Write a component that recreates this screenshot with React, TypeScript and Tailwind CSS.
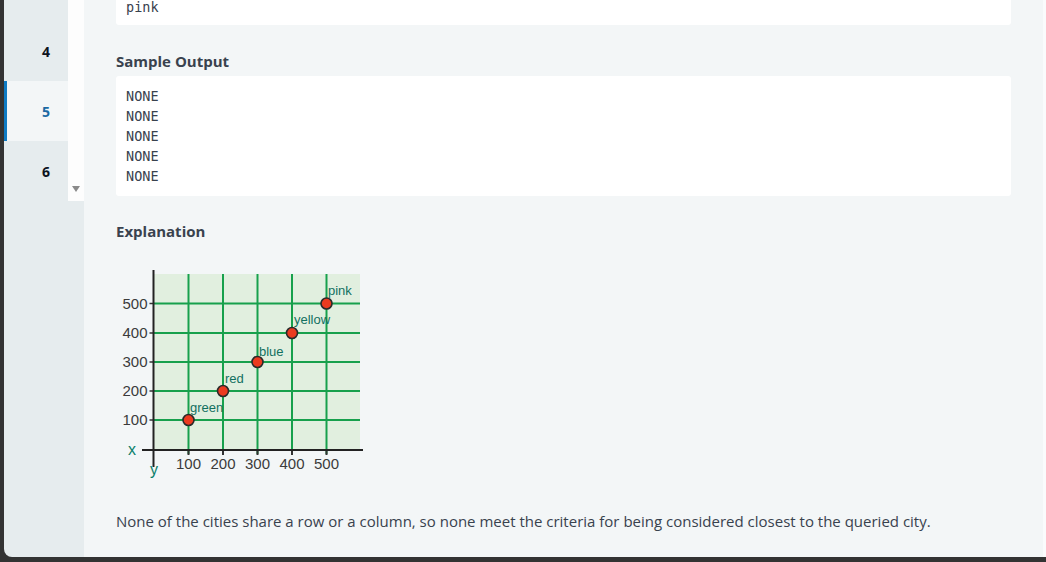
import React from "react";

const TABS = [
  { label: "4", active: false },
  { label: "5", active: true },
  { label: "6", active: false },
];

const OUTPUT_LINES = ["NONE", "NONE", "NONE", "NONE", "NONE"];

// grid positions in the plot (svg coordinates, origin = chart top-left)
const X0 = 116;
const Y0 = 262;
const COLS = [188.5, 223, 257.5, 292, 326.5];
const ROWS = [
  { y: 303.5, label: "500" },
  { y: 333, label: "400" },
  { y: 362, label: "300" },
  { y: 391, label: "200" },
  { y: 420, label: "100" },
];
const CITIES = [
  { name: "green", x: 188.5, y: 420, lx: 190, ly: 412 },
  { name: "red", x: 223, y: 391, lx: 225, ly: 383 },
  { name: "blue", x: 257.5, y: 362, lx: 259, ly: 356 },
  { name: "yellow", x: 292, y: 333, lx: 294, ly: 324 },
  { name: "pink", x: 326.5, y: 303.5, lx: 328, ly: 295 },
];

function CityChart() {
  return (
    <svg width={254} height={216} viewBox={`${X0} ${Y0} 254 216`} className="block">
      <rect x={154} y={274} width={206} height={176} fill="#e1efdf" />
      {COLS.map((x) => (
        <line key={x} x1={x} y1={274} x2={x} y2={454} stroke="#17a04c" strokeWidth={2} />
      ))}
      {COLS.map((x) => (
        <line key={`t${x}`} x1={x} y1={449} x2={x} y2={455} stroke="#333" strokeWidth={2} />
      ))}
      {ROWS.map((r) => (
        <g key={r.label}>
          <line x1={154} y1={r.y} x2={360} y2={r.y} stroke="#17a04c" strokeWidth={2} />
          <line x1={149.5} y1={r.y} x2={154} y2={r.y} stroke="#333" strokeWidth={1.5} />
          <text
            x={147.5}
            y={r.y + 5}
            textAnchor="end"
            fontFamily="'Liberation Sans', Arial, sans-serif"
            fontSize={15}
            fill="#3b3b3b"
          >
            {r.label}
          </text>
        </g>
      ))}
      <line x1={153.5} y1={270} x2={153.5} y2={467} stroke="#222" strokeWidth={2} />
      <line x1={142} y1={450} x2={363} y2={450} stroke="#222" strokeWidth={2} />
      <text x={128} y={455} fontFamily="'Liberation Sans', Arial, sans-serif" fontSize={16} fill="#0b7f6a">
        x
      </text>
      <text x={150} y={475} fontFamily="'Liberation Sans', Arial, sans-serif" fontSize={16} fill="#0b7f6a">
        y
      </text>
      {COLS.map((x, i) => (
        <text
          key={`xl${x}`}
          x={x}
          y={469}
          textAnchor="middle"
          fontFamily="'Liberation Sans', Arial, sans-serif"
          fontSize={15}
          fill="#3b3b3b"
        >
          {(i + 1) * 100}
        </text>
      ))}
      {CITIES.map((c) => (
        <g key={c.name}>
          <circle cx={c.x} cy={c.y} r={5.5} fill="#ec3a1f" stroke="#2a2a2a" strokeWidth={1.6} />
          <text x={c.lx} y={c.ly} fontFamily="'Liberation Sans', Arial, sans-serif" fontSize={13} fill="#12705f">
            {c.name}
          </text>
        </g>
      ))}
    </svg>
  );
}

export default function App() {
  return (
    <div className="flex h-[562px] w-[1046px] overflow-hidden bg-[#333] pb-[5px] pl-[4px] font-['Open_Sans',sans-serif] text-[#39424e]">
      <div className="flex min-w-0 flex-1 overflow-hidden rounded-bl-[8px]">
        <aside className="flex w-[80px] shrink-0 items-start bg-[#e6ecee]">
          <div className="flex w-[64px] flex-col">
            <div className="h-[21px]" />
            {TABS.map((tab) => (
              <div
                key={tab.label}
                className={
                  tab.active
                    ? "flex h-[60px] items-center justify-center border-l-[3px] border-[#0f7bc4] bg-[#f3f6f7] pl-[17px] text-[14px] font-bold text-[#1b6aa3]"
                    : "flex h-[60px] items-center justify-center pl-[20px] text-[14px] font-bold text-[#0e141e]"
                }
              >
                {tab.label}
              </div>
            ))}
          </div>
          <div className="flex h-[201px] w-[16px] flex-col items-center justify-end bg-[#fdfdfd] pb-[9px]">
            <span className="h-0 w-0 border-x-[4px] border-t-[6px] border-x-transparent border-t-[#8a8a8a]" />
          </div>
        </aside>

        <main className="flex min-w-0 flex-1 flex-col bg-[#f3f6f7] px-[32px]">
          <div className="flex h-[25px] flex-col justify-end overflow-hidden rounded-b-[3px] bg-white px-[10px] pb-[8px] font-['DejaVu_Sans_Mono',monospace] text-[13.5px] leading-[20px] text-[#39424e]">
            <div>pink</div>
          </div>

          <h3 className="mb-[5px] mt-[26px] text-[15px] font-bold leading-[20px] text-[#39424e]">Sample Output</h3>
          <pre className="rounded-[3px] bg-white px-[10px] py-[10px] font-['DejaVu_Sans_Mono',monospace] text-[13.5px] leading-[20px] text-[#39424e]">
            {OUTPUT_LINES.map((line, i) => (
              <div key={i}>{line}</div>
            ))}
          </pre>

          <h3 className="mt-[25px] text-[15px] font-bold leading-[20px] text-[#39424e]">Explanation</h3>
          <div className="mt-[21px]">
            <CityChart />
          </div>

          <p className="mt-[32px] text-[15px] leading-[22px] text-[#39424e]">
            None of the cities share a row or a column, so none meet the criteria for being considered closest to the
            queried city.
          </p>
        </main>
        <div className="w-[3px] shrink-0 bg-[#fafbfc]" />
      </div>
    </div>
  );
}
